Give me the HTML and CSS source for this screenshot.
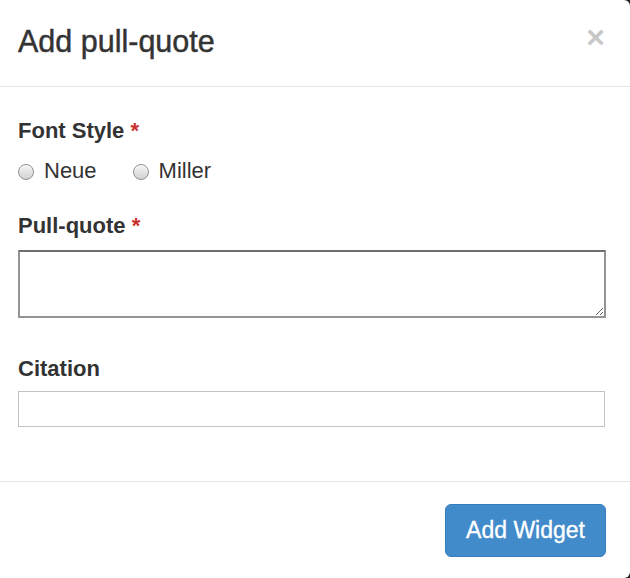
FILE: index.html
```html
<!DOCTYPE html>
<html>
<head>
<meta charset="utf-8">
<link rel="stylesheet" href="styles.css">
</head>
<body>
<div class="modal">
  <div class="modal-header">
    <h4 class="modal-title">Add pull-quote</h4>
    <button class="close" type="button">×</button>
  </div>
  <div class="modal-body">
    <label class="field-label label-font">Font Style <span class="req">*</span></label>
    <div class="radios">
      <label class="radio-opt"><input type="radio" name="fs"><span>Neue</span></label>
      <label class="radio-opt"><input type="radio" name="fs"><span>Miller</span></label>
    </div>
    <label class="field-label label-quote">Pull-quote <span class="req">*</span></label>
    <textarea class="quote"></textarea>
    <label class="field-label label-cite">Citation</label>
    <input class="cite" type="text">
  </div>
  <div class="modal-footer">
    <button class="btn-primary" type="button">Add Widget</button>
  </div>
</div>
</body>
</html>
```
FILE: styles.css
```css
* { box-sizing: border-box; }
html, body { margin: 0; padding: 0; }
body {
  background: #222;
  font-family: "Liberation Sans", Arial, sans-serif;
  color: #333;
  width: 630px;
  height: 578px;
  overflow: hidden;
}
.modal {
  width: 630px;
  height: 578px;
  background: #fff;
  border-radius: 0 6px 6px 0;
  display: flex;
  flex-direction: column;
}
.modal-header {
  height: 87px;
  padding: 25px 25px 0 18px;
  border-bottom: 1px solid #e5e5e5;
  display: flex;
  justify-content: space-between;
  align-items: flex-start;
}
.modal-title {
  margin: 0;
  font-size: 30.5px;
  line-height: 33px;
  font-weight: normal;
  color: #333;
  -webkit-text-stroke: 0.45px #333;
}
.close {
  border: 0;
  background: none;
  padding: 0;
  margin-top: -2px;
  font-family: "Liberation Sans", Arial, sans-serif;
  font-size: 32px;
  line-height: 29px;
  font-weight: bold;
  color: #c8c8c8;
}
.modal-body {
  padding: 28px 24px 0 18px;
  display: flex;
  flex-direction: column;
  height: 394px;
}
.field-label {
  display: block;
  font-size: 22px;
  line-height: 31px;
  font-weight: bold;
  color: #333;
}
.req { color: #c9302c; }
.radios {
  display: flex;
  margin-top: 9px;
  gap: 36px;
}
.radio-opt {
  display: flex;
  align-items: center;
  font-size: 22px;
  line-height: 31px;
  color: #333;
}
.radio-opt input {
  appearance: none;
  -webkit-appearance: none;
  width: 16px;
  height: 16px;
  margin: 3px 10px 0 0;
  border-radius: 50%;
  border: 1px solid #8e8e8e;
  background: linear-gradient(#f4f4f4, #d2d2d2);
  box-shadow: inset 0 1px 1px rgba(255,255,255,0.9);
}
.label-quote { margin-top: 24px; }
.quote {
  margin-top: 9px;
  width: 588px;
  height: 68px;
  border: 2px solid #949494;
  border-top-color: #6e6e6e;
  border-radius: 0;
  resize: vertical;
  font-family: "Liberation Sans", Arial, sans-serif;
}
.label-cite { margin-top: 35px; }
.cite {
  margin-top: 7px;
  width: 587px;
  height: 36px;
  border: 1px solid #c2c2c2;
  border-radius: 0;
  padding: 0;
}
.modal-footer {
  border-top: 1px solid #e5e5e5;
  padding: 22px 24px 0 18px;
  display: flex;
  justify-content: flex-end;
  flex: 1;
}
.btn-primary {
  height: 53px;
  padding: 10px 20px;
  font-family: "Liberation Sans", Arial, sans-serif;
  font-size: 23px;
  line-height: 31px;
  color: #fff;
  background: #428bca;
  border: 1px solid #357ebd;
  border-radius: 6px;
  -webkit-text-stroke: 0.35px #fff;
}
```
